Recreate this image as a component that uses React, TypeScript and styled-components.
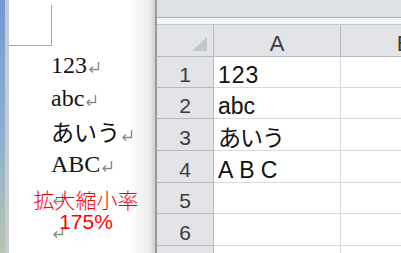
import React from "react";
import styled, { createGlobalStyle } from "styled-components";

const GlobalStyle = createGlobalStyle`
  html, body {
    margin: 0;
    padding: 0;
    background: #ffffff;
    overflow: hidden;
  }
`;

const Screen = styled.div`
  display: flex;
  width: 401px;
  height: 253px;
  overflow: hidden;
`;

/* ---------- Word side ---------- */

const WordPane = styled.div`
  display: flex;
  width: 155px;
  flex-shrink: 0;
`;

const DesktopStrip = styled.div`
  width: 5px;
  background: linear-gradient(to bottom, #6f9bd3 0%, #8fb0cf 55%, #b7c6ad 100%);
`;

const PageGutter = styled.div`
  width: 4px;
  background: #c7cbd0;
`;

const Page = styled.div`
  position: relative;
  flex: 1;
  background: linear-gradient(
    to right,
    #ffffff 0,
    #ffffff calc(100% - 26px),
    #ececec calc(100% - 6px),
    #d0d0d0 100%
  );
`;

const CornerMark = styled.div`
  width: 42px;
  height: 40px;
  margin-top: 5px;
  border-right: 1px solid #a8a8a8;
  border-bottom: 1px solid #a8a8a8;
`;

const Body = styled.div`
  margin-top: 3px;
  padding-left: 42px;
`;

const Para = styled.div`
  height: 33px;
  line-height: 33px;
  font-family: "Liberation Serif", "Noto Sans CJK JP", serif;
  font-size: 24px;
  color: #141414;
  white-space: nowrap;
`;

const Kana = styled.span`
  font-family: "Noto Sans CJK JP", sans-serif;
  font-size: 23px;
  font-weight: 400;
  color: #111111;
`;

const MarkSvg = styled.svg`
  display: inline-block;
  width: 12px;
  height: 12px;
  margin-left: 1px;
  vertical-align: baseline;
`;

const ReturnMark = () => (
  <MarkSvg viewBox="0 0 12 12">
    <path d="M10.5 1 V8.5 H2" fill="none" stroke="#8a8a8a" strokeWidth="1.4" />
    <path d="M5 5.5 L2 8.5 L5 11.5" fill="none" stroke="#8a8a8a" strokeWidth="1.4" />
  </MarkSvg>
);

const ZoomNote = styled.div`
  position: absolute;
  left: 17px;
  top: 190px;
  width: 120px;
  text-align: center;
  font-family: "Liberation Sans", "Noto Sans CJK JP", sans-serif;
  font-size: 21px;
  line-height: 21px;
  font-weight: 300;
  color: #ff0000;
`;

/* ---------- Excel side ---------- */

const ExcelPane = styled.div`
  flex: 1;
  display: flex;
  flex-direction: column;
  border-left: 2px solid #989b9f;
  background: #ffffff;
  overflow: hidden;
`;

const FormulaArea = styled.div`
  flex-shrink: 0;
  height: 17px;
  background: #dde0e4;
  border-bottom: 1px solid #adb1b6;
`;

const SplitStrip = styled.div`
  flex-shrink: 0;
  height: 6px;
  background: #f3f5fa;
  border-bottom: 1px solid #c3c6ca;
`;

const Sheet = styled.div`
  flex-shrink: 0;
  display: grid;
  grid-template-columns: 57px 127px 127px;
  grid-template-rows: 32px 31px 31px 32px 32px 31px 32px 31px;
`;

const HeadCell = styled.div<{ $column?: boolean }>`
  position: relative;
  display: flex;
  align-items: flex-end;
  justify-content: center;
  box-sizing: border-box;
  background: #e2e4e7;
  border-right: 1px solid #b7bbbf;
  border-bottom: 1px solid #b7bbbf;
  font-family: "Liberation Sans", sans-serif;
  font-size: ${(p) => (p.$column ? "22px" : "21px")};
  line-height: 24px;
  color: #3c3c3c;
`;

const CornerTriangle = styled.svg`
  position: absolute;
  right: 6px;
  bottom: 5px;
  width: 15px;
  height: 14px;
`;

const Cell = styled.div<{ $spacing?: number }>`
  display: flex;
  align-items: flex-end;
  box-sizing: border-box;
  padding-left: 4px;
  border-right: 1px solid #dadada;
  border-bottom: 1px solid #dadada;
  font-family: "Liberation Sans", "Noto Sans CJK JP", sans-serif;
  font-size: 23px;
  line-height: 24px;
  letter-spacing: ${(p) => p.$spacing ?? 0}px;
  color: #111111;
  white-space: nowrap;
`;

// row 7 is only a sliver at the bottom edge, its number falls out of view
const rows: { label: string; value: string; spacing: number }[] = [
  { label: "1", value: "123", spacing: 1 },
  { label: "2", value: "abc", spacing: 0 },
  { label: "3", value: "あいう", spacing: -1 },
  { label: "4", value: "ABC", spacing: 6 },
  { label: "5", value: "", spacing: 0 },
  { label: "6", value: "", spacing: 0 },
  { label: "", value: "", spacing: 0 },
];

export default function App() {
  return (
    <>
      <GlobalStyle />
      <Screen>
        <WordPane>
          <DesktopStrip />
          <PageGutter />
          <Page>
            <CornerMark />
            <Body>
              <Para>
                123
                <ReturnMark />
              </Para>
              <Para>
                abc
                <ReturnMark />
              </Para>
              <Para>
                <Kana>あいう</Kana>
                <ReturnMark />
              </Para>
              <Para>
                ABC
                <ReturnMark />
              </Para>
              <Para>
                <ReturnMark />
              </Para>
              <Para>
                <ReturnMark />
              </Para>
            </Body>
            <ZoomNote>
              拡大縮小率
              <br />
              175%
            </ZoomNote>
          </Page>
        </WordPane>

        <ExcelPane>
          <FormulaArea />
          <SplitStrip />
          <Sheet>
            <HeadCell>
              <CornerTriangle viewBox="0 0 15 14">
                <polygon points="15,0 15,14 0,14" fill="#c3c6ca" />
              </CornerTriangle>
            </HeadCell>
            <HeadCell $column>A</HeadCell>
            <HeadCell $column>B</HeadCell>
            {rows.map((row, i) => (
              <React.Fragment key={i}>
                <HeadCell>{row.label}</HeadCell>
                <Cell $spacing={row.spacing}>{row.value}</Cell>
                <Cell />
              </React.Fragment>
            ))}
          </Sheet>
        </ExcelPane>
      </Screen>
    </>
  );
}
